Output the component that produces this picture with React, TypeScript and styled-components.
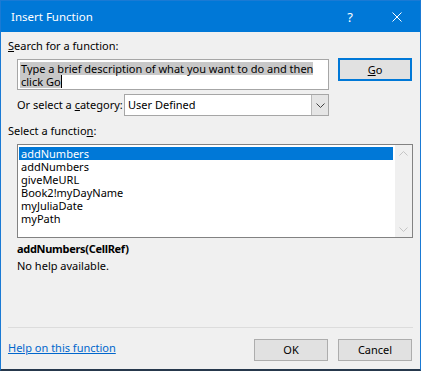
import React from "react";
import styled, { createGlobalStyle } from "styled-components";

const Global = createGlobalStyle`
  html, body { margin: 0; padding: 0; background: #f0f0f0; }
  body { font-family: "Noto Sans", "Open Sans", sans-serif; font-size: 11px; color: #000; }
  * { box-sizing: border-box; }
`;

const Dialog = styled.div`
  width: 421px;
  height: 371px;
  display: flex;
  flex-direction: column;
  background: #f0f0f0;
  border: 1px solid #1a7ad4;
  border-bottom: 2px solid #26384c;
`;

const TitleBar = styled.div`
  height: 31px;
  flex: none;
  background: #0078d7;
  color: #fff;
  display: flex;
  align-items: center;
  padding-left: 10px;
  font-size: 11.5px;
  line-height: 16px;
`;

const TitleText = styled.div`
  flex: 1;
`;

const HelpGlyph = styled.div`
  width: 12px;
  margin-right: 36px;
  font-size: 13px;
  text-align: center;
`;

const CloseBox = styled.div`
  width: 10px;
  height: 10px;
  margin-right: 18px;
  display: flex;
`;

const Content = styled.div`
  flex: 1;
  display: flex;
  flex-direction: column;
  padding: 6px 7px 8px 7px;
`;

const Label = styled.div<{ $mt?: number; $indent?: number }>`
  line-height: 16px;
  margin-top: ${(p) => p.$mt ?? 0}px;
  padding-left: ${(p) => p.$indent ?? 0}px;
  white-space: nowrap;
`;

const Row = styled.div<{ $mt: number; $align?: string }>`
  display: flex;
  align-items: ${(p) => p.$align ?? "flex-start"};
  margin-top: ${(p) => p.$mt}px;
  padding-left: 9px;
`;

const TextArea = styled.div`
  width: 312px;
  height: 31px;
  margin-top: 1px;
  background: #fff;
  border: 1px solid #a6a6a6;
  padding: 2px 2px 0 2px;
`;

const SelLine = styled.div`
  display: flex;
  align-items: center;
  height: 13px;
`;

const Sel = styled.span`
  display: inline-block;
  height: 13px;
  line-height: 13px;
  background: #c8c8c8;
  padding-left: 1px;
  white-space: nowrap;
`;

const Caret = styled.span`
  display: inline-block;
  width: 1px;
  height: 13px;
  background: #000;
`;

const Button = styled.div<{ $default?: boolean; $mr?: number }>`
  width: 74px;
  height: ${(p) => (p.$default ? 23 : 22)}px;
  margin-left: ${(p) => (p.$default ? 9 : 10)}px;
  margin-right: ${(p) => p.$mr ?? 0}px;
  display: flex;
  align-items: center;
  justify-content: center;
  background: #e1e1e1;
  border: ${(p) => (p.$default ? "2px solid #0078d7" : "1px solid #adadad")};
  line-height: 16px;
`;

const CatLabel = styled.div`
  width: 107px;
  line-height: 16px;
  white-space: nowrap;
`;

const Select = styled.div`
  width: 205px;
  height: 22px;
  display: flex;
  background: #fff;
  border: 1px solid #a6a6a6;
`;

const SelectValue = styled.div`
  flex: 1;
  padding-left: 3px;
  line-height: 19px;
`;

const DropButton = styled.div`
  width: 17px;
  display: flex;
  align-items: center;
  justify-content: center;
  background: #e5e5e5;
  border-left: 1px solid #b9b9b9;
`;

const ListBox = styled.div`
  margin-top: 5px;
  margin-left: 9px;
  height: 94px;
  display: flex;
  background: #fff;
  border: 1px solid #828282;
`;

const Items = styled.div`
  flex: 1;
  padding: 2px 2px 0 1px;
`;

const Item = styled.div<{ $selected?: boolean }>`
  height: 13px;
  line-height: 13px;
  padding-left: 2px;
  background: ${(p) => (p.$selected ? "#0078d7" : "transparent")};
  color: ${(p) => (p.$selected ? "#fff" : "#000")};
`;

const ScrollBar = styled.div`
  width: 17px;
  background: #f0f0f0;
  display: flex;
  flex-direction: column;
  justify-content: space-between;
  align-items: center;
  padding: 6px 0 5px;
`;

const Desc = styled.div<{ $bold?: boolean; $mt: number }>`
  margin-top: ${(p) => p.$mt}px;
  padding-left: 9px;
  line-height: 16px;
  font-weight: ${(p) => (p.$bold ? 700 : 400)};
  letter-spacing: ${(p) => (p.$bold ? "-0.3px" : "0")};
`;

const Spacer = styled.div`
  flex: 1;
`;

const Separator = styled.div`
  height: 1px;
  background: #dcdcdc;
  flex: none;
`;

const Footer = styled.div`
  display: flex;
  align-items: flex-start;
  margin-top: 11px;
`;

const HelpLink = styled.a`
  margin-top: 1px;
  line-height: 16px;
  color: #0066cc;
  text-decoration: underline;
  flex: 1;
  cursor: pointer;
`;

const Chevron = ({ up, color }: { up?: boolean; color: string }) => (
  <svg width="9" height="5" viewBox="0 0 9 5">
    <path
      d={up ? "M0.5 4.5 L4.5 0.5 L8.5 4.5" : "M0.5 0.5 L4.5 4.5 L8.5 0.5"}
      fill="none"
      stroke={color}
      strokeWidth="1"
    />
  </svg>
);

const items = ["addNumbers", "addNumbers", "giveMeURL", "Book2!myDayName", "myJuliaDate", "myPath"];

export default function App() {
  return (
    <>
      <Global />
      <Dialog>
        <TitleBar>
          <TitleText>Insert Function</TitleText>
          <HelpGlyph>?</HelpGlyph>
          <CloseBox>
            <svg width="10" height="10" viewBox="0 0 10 10">
              <path d="M0.5 0.5 L9.5 9.5 M9.5 0.5 L0.5 9.5" stroke="#fff" strokeWidth="1" />
            </svg>
          </CloseBox>
        </TitleBar>
        <Content>
          <Label>
            <u>S</u>earch for a function:
          </Label>
          <Row $mt={4}>
            <TextArea>
              <SelLine>
                <Sel>Type a brief description of what you want to do and then</Sel>
              </SelLine>
              <SelLine>
                <Sel>click Go</Sel>
                <Caret />
              </SelLine>
            </TextArea>
            <Button $default>
              <span>
                <u>G</u>o
              </span>
            </Button>
          </Row>
          <Row $mt={4} $align="center">
            <CatLabel>
              Or select a <u>c</u>ategory:
            </CatLabel>
            <Select>
              <SelectValue>User Defined</SelectValue>
              <DropButton>
                <Chevron color="#404040" />
              </DropButton>
            </Select>
          </Row>
          <Label $mt={7}>
            Select a functio<u>n</u>:
          </Label>
          <ListBox>
            <Items>
              {items.map((it, i) => (
                <Item key={i} $selected={i === 0}>
                  {it}
                </Item>
              ))}
            </Items>
            <ScrollBar>
              <Chevron up color="#c5c5c5" />
              <Chevron color="#c5c5c5" />
            </ScrollBar>
          </ListBox>
          <Desc $bold $mt={3}>
            addNumbers(CellRef)
          </Desc>
          <Desc $mt={1}>No help available.</Desc>
          <Spacer />
          <Separator />
          <Footer>
            <HelpLink>Help on this function</HelpLink>
            <Button>OK</Button>
            <Button $mr={1}>Cancel</Button>
          </Footer>
        </Content>
      </Dialog>
    </>
  );
}
